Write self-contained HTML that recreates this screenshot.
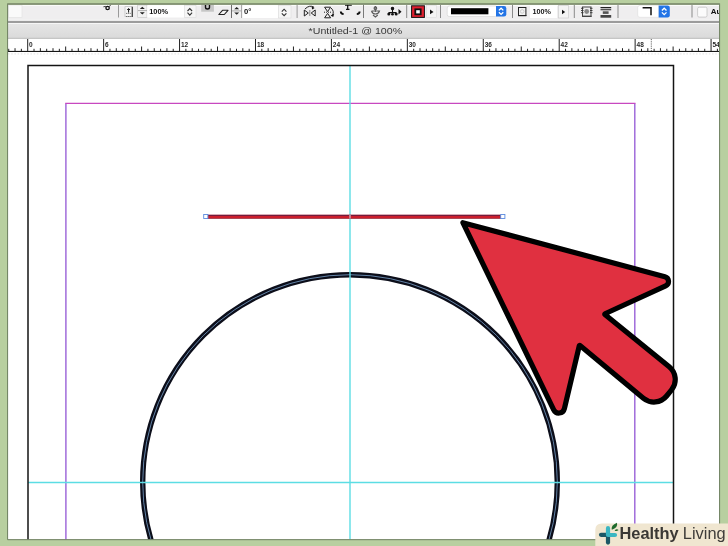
<!DOCTYPE html>
<html><head><meta charset="utf-8">
<style>
html,body{margin:0;padding:0;}
body{width:728px;height:546px;overflow:hidden;background:#b8cfa0;position:relative;}
svg{position:absolute;left:0;top:0;font-family:"Liberation Sans",sans-serif;will-change:transform;}
</style></head>
<body>
<svg width="728" height="546" viewBox="0 0 728 546">
<defs>
  <linearGradient id="tg" x1="0" y1="0" x2="0" y2="1"><stop offset="0" stop-color="#e6e6e6"/><stop offset="1" stop-color="#d9d9d9"/></linearGradient>
  <clipPath id="fc"><rect x="8" y="4" width="711" height="535.5"/></clipPath>
</defs>
<rect width="728" height="546" fill="#b8cfa0"/>
<g clip-path="url(#fc)">

  <!-- toolbar -->
  <rect x="8" y="4" width="711" height="17" fill="#efeeef"/>
  <rect x="8" y="4.9" width="711" height="1.1" fill="#fbfcfa"/>
  <rect x="8" y="19.6" width="711" height="1.3" fill="#f5f5f5"/>
  <rect x="8" y="20.9" width="711" height="2.1" fill="#9c9c9c"/>
  <rect x="8.5" y="5" width="13.5" height="12.5" fill="#fafafa" stroke="#e0e0e0" stroke-width="0.6"/>
  <!-- cut icon at 104-112 -->
  <circle cx="107.6" cy="8" r="1.7" fill="none" stroke="#111" stroke-width="1.3"/>
  <path d="M103.4 6.8 Q105.5 6 106.6 6.8 M109 6.8 L111 4.6" stroke="#333" stroke-width="0.9" fill="none"/>
  <rect x="118" y="5" width="1" height="12.5" fill="#9a9a9a"/>
  <!-- text frame icon -->
  <rect x="125" y="6.7" width="7.4" height="10" fill="#f6f6f6" stroke="#b4b4b4" stroke-width="0.6"/>
  <path d="M132.2 6.8 V17" stroke="#111" stroke-width="1"/>
  <path d="M128.6 8.6 V12.6 M127.2 10 L128.6 8.6 L130 10" stroke="#111" stroke-width="1" fill="none"/>
  <path d="M126 13.4 H131 M126 16.5 H131.5" stroke="#555" stroke-width="0.8" stroke-dasharray="1.2 0.6"/>
  <!-- spinner 1 -->
  <rect x="137.7" y="5" width="9.3" height="12.5" fill="#f2f2f2" stroke="#c4c4c4" stroke-width="0.6"/>
  <path d="M139.8 9 L142.3 6.8 L144.8 9 Z M139.8 12.3 L142.3 14.5 L144.8 12.3 Z" fill="#222"/>
  <path d="M138 10.6 H147" stroke="#9a9a9a" stroke-width="0.8"/>
  <rect x="147.2" y="5.5" width="37.5" height="12" fill="#fff"/>
  <text x="149.2" y="13.6" font-size="7.7" font-weight="bold" fill="#151515" textLength="19" lengthAdjust="spacingAndGlyphs">100%</text>
  <rect x="184.7" y="5.5" width="11.3" height="12" fill="#f6f6f6" stroke="#d6d6d6" stroke-width="0.5"/>
  <path d="M187.5 11 L189.8 8.6 L192.1 11 M187.5 12.7 L189.8 15.1 L192.1 12.7" stroke="#333" stroke-width="1.1" fill="none"/>
  <!-- gray block -->
  <rect x="201.2" y="4.2" width="12.7" height="7.5" fill="#c6c6c6"/>
  <path d="M205.5 5 V7.2 Q205.5 9 207.5 9 Q209.5 9 209.5 7.2 V5" stroke="#111" stroke-width="1.4" fill="none"/>
  <!-- shear -->
  <path d="M218.8 14.5 L222.5 10.3 H228 L224.3 14.5 Z" fill="#f4f4f4" stroke="#222" stroke-width="1.1" stroke-linejoin="round"/>
  <rect x="231" y="5" width="1" height="13" fill="#6e6e6e"/>
  <rect x="232" y="5" width="9.3" height="13" fill="#f2f2f2"/>
  <path d="M234.2 9.2 L236.7 7 L239.2 9.2 Z M234.2 12.6 L236.7 14.8 L239.2 12.6 Z" fill="#222"/>
  <path d="M232 10.9 H241" stroke="#9a9a9a" stroke-width="0.8"/>
  <rect x="241.3" y="5" width="0.9" height="13" fill="#8a8a8a"/>
  <rect x="242.3" y="5.5" width="36" height="12.5" fill="#fff"/>
  <text x="244" y="13.9" font-size="7.7" font-weight="bold" fill="#111">0°</text>
  <rect x="278.4" y="5.5" width="12.6" height="12.5" fill="#f6f6f6" stroke="#d6d6d6" stroke-width="0.5"/>
  <path d="M281.8 11.6 L284.1 9.2 L286.4 11.6 M281.8 13.3 L284.1 15.7 L286.4 13.3" stroke="#333" stroke-width="1.1" fill="none"/>
  <rect x="296.6" y="5" width="1" height="13" fill="#9a9a9a"/>
  <!-- flip h icon -->
  <g stroke="#222" stroke-width="1" fill="none">
    <path d="M304.3 10 L308.3 13 L304.3 16 Z"/>
    <path d="M315.2 10 L311.2 13 L315.2 16 Z"/>
    <path d="M309.8 10.5 V16.5" stroke-dasharray="1 1"/>
    <path d="M305 9 Q309.5 4.5 314 7.2"/>
  </g>
  <path d="M311.6 6.4 L314.6 7.9 L312.2 9.6 Z" fill="#111"/>
  <!-- flip v icon -->
  <g stroke="#222" stroke-width="1" fill="none">
    <path d="M324.6 7.2 L327.6 11.6 L330.6 7.2 Z"/>
    <path d="M324.6 17.8 L327.6 13.4 L330.6 17.8 Z"/>
    <path d="M324 12.2 H331" stroke-dasharray="1 1"/>
    <path d="M331 8 Q335 11.5 332 16"/>
  </g>
  <path d="M330.6 15.6 L333.2 17 L334.2 13.8 Z" fill="#111"/>
  <!-- corner icon -->
  <path d="M345 5 H351.8 M347.7 5 V9.5 M346 9.3 H349.5" stroke="#111" stroke-width="1.3" fill="none"/>
  <path d="M340.8 11.4 Q340.8 13.9 343.6 14" stroke="#111" stroke-width="1.9" fill="none"/>
  <path d="M359.6 11.4 Q359.6 13.9 356.8 14" stroke="#111" stroke-width="1.9" fill="none"/>
  <rect x="363" y="4.5" width="1" height="13.5" fill="#7a7a7a"/>
  <!-- select container icon -->
  <g stroke="#5a5a5a" stroke-width="1.1" fill="none">
    <path d="M375.4 6 V12"/>
    <circle cx="375.4" cy="8.2" r="1.3" fill="#888"/>
    <path d="M371.5 11 H379.5 Q378.5 14 375.4 14 Q372.5 14 371.5 11"/>
    <path d="M373 15 L375.4 17 L377.8 15"/>
  </g>
  <!-- select content icon -->
  <g stroke="#111" stroke-width="1.1" fill="none">
    <path d="M392.5 8 V13"/>
    <circle cx="392.5" cy="8.4" r="1.2" fill="#111"/>
    <path d="M388.6 12.6 H396.4"/>
  </g>
  <circle cx="388.8" cy="14" r="1.5" fill="#111"/><circle cx="392.5" cy="14.2" r="1.3" fill="#111"/><circle cx="396.2" cy="14" r="1.5" fill="#111"/>
  <path d="M398.5 9 L401.5 11.8 L398.5 14.5 Z" fill="#111"/>
  <rect x="406.2" y="5" width="1" height="13" fill="#8a8a8a"/>
  <!-- stroke swatch -->
  <rect x="411.6" y="5.8" width="12.8" height="11.6" fill="#e0202f" stroke="#111" stroke-width="1"/>
  <rect x="415.3" y="9.3" width="5.4" height="5" fill="#fff" stroke="#111" stroke-width="1.8"/>
  <rect x="426.4" y="5.5" width="9.9" height="12" fill="#f4f4f4" stroke="#d8d8d8" stroke-width="0.5"/>
  <path d="M430 9.5 L433.5 11.9 L430 14.3 Z" fill="#111"/>
  <rect x="440" y="5" width="1" height="13" fill="#8a8a8a"/>
  <!-- stroke dropdown -->
  <rect x="447.2" y="6" width="50" height="10.5" rx="2" fill="#fff" stroke="#d2d2d2" stroke-width="0.6"/>
  <rect x="451" y="8.2" width="37.4" height="6.1" fill="#000"/>
  <path d="M496 6 H504 Q506.3 6 506.3 8.3 V14.2 Q506.3 16.5 504 16.5 H496 Z" fill="#2274e6"/>
  <path d="M498.9 10.4 L501.1 8.2 L503.3 10.4 M498.9 12.2 L501.1 14.4 L503.3 12.2" stroke="#fff" stroke-width="1.3" fill="none"/>
  <rect x="512" y="5" width="1" height="13" fill="#8a8a8a"/>
  <!-- opacity icon -->
  <rect x="518.5" y="7.5" width="7.4" height="8" fill="#f2f2f2" stroke="#222" stroke-width="1"/>
  <rect x="518" y="15" width="8.4" height="1.2" fill="#222"/>
  <circle cx="522.2" cy="11.4" r="1.8" fill="none" stroke="#bbb" stroke-width="0.7"/>
  <rect x="530" y="5.5" width="27" height="12.5" fill="#fff"/>
  <text x="532.4" y="13.9" font-size="7.7" font-weight="bold" fill="#151515" textLength="18.5" lengthAdjust="spacingAndGlyphs">100%</text>
  <rect x="558.4" y="5.5" width="10.1" height="12.5" fill="#f4f4f4" stroke="#c8c8c8" stroke-width="0.6"/>
  <path d="M562 9.8 L565.2 12 L562 14.2 Z" fill="#111"/>
  <rect x="573.8" y="5" width="1" height="13" fill="#8a8a8a"/>
  <!-- wrap icons -->
  <rect x="582.5" y="7" width="8.5" height="9.5" fill="#eee" stroke="#444" stroke-width="1"/>
  <path d="M581 8.3 H583.5 M581 10.5 H583.5 M581 12.7 H583.5 M590 8.3 H592.5 M590 10.5 H592.5 M590 12.7 H592.5" stroke="#333" stroke-width="0.9"/>
  <circle cx="586.7" cy="11.5" r="2.4" fill="#888"/>
  <rect x="582" y="15.6" width="9.5" height="1.4" fill="#444"/>
  <path d="M600.5 7.6 H611.2 M600.5 9.7 H611.2" stroke="#222" stroke-width="1.1"/>
  <rect x="602.8" y="11.3" width="5.8" height="2.6" fill="#555"/>
  <rect x="600.5" y="15" width="10.7" height="2.7" fill="#444"/>
  <rect x="617.5" y="5" width="1" height="13" fill="#8a8a8a"/>
  <!-- corner dropdown -->
  <path d="M658.7 5.4 H640 Q637.7 5.4 637.7 7.7 V15 Q637.7 17.3 640 17.3 H658.7 Z" fill="#fff" stroke="#d8d8d8" stroke-width="0.5"/>
  <path d="M642.6 7.7 H651 V15.3" stroke="#111" stroke-width="1.5" fill="none"/>
  <path d="M658.7 5.4 H667.5 Q669.8 5.4 669.8 7.7 V15.2 Q669.8 17.5 667.5 17.5 H658.7 Z" fill="#2274e6"/>
  <path d="M661.9 10.5 L664.2 8.2 L666.5 10.5 M661.9 12.4 L664.2 14.7 L666.5 12.4" stroke="#fff" stroke-width="1.3" fill="none"/>
  <rect x="691.5" y="5" width="1" height="12.5" fill="#8a8a8a"/>
  <rect x="697.6" y="7.2" width="9.4" height="9.9" rx="1.5" fill="#fbfbfb" stroke="#bdbdbd" stroke-width="0.7"/>
  <text x="710.8" y="14.4" font-size="8" font-weight="bold" fill="#111">Au</text>


  <rect x="8" y="23" width="711" height="15.9" fill="url(#tg)"/>
  <rect x="8" y="23" width="711" height="1" fill="#f6f6f6"/>
  <rect x="8" y="37.8" width="711" height="1.1" fill="#bdbdbd"/>
  <text x="308.6" y="34.4" font-size="9.9" fill="#383838" textLength="93.5" lengthAdjust="spacingAndGlyphs">*Untitled-1 @ 100%</text>


  <rect x="8" y="38.9" width="711" height="12.1" fill="#fff"/>
  <path d="M8.72 48.8V51.5 M15.04 48.2V51.5 M21.37 48.8V51.5 M27.70 39V51.5 M34.03 48.8V51.5 M40.36 48.2V51.5 M46.68 48.8V51.5 M53.01 48.2V51.5 M59.34 48.8V51.5 M65.67 46.5V51.5 M71.99 48.8V51.5 M78.32 48.2V51.5 M84.65 48.8V51.5 M90.98 48.2V51.5 M97.30 48.8V51.5 M103.63 39V51.5 M109.96 48.8V51.5 M116.29 48.2V51.5 M122.61 48.8V51.5 M128.94 48.2V51.5 M135.27 48.8V51.5 M141.59 46.5V51.5 M147.92 48.8V51.5 M154.25 48.2V51.5 M160.58 48.8V51.5 M166.91 48.2V51.5 M173.23 48.8V51.5 M179.56 39V51.5 M185.89 48.8V51.5 M192.22 48.2V51.5 M198.54 48.8V51.5 M204.87 48.2V51.5 M211.20 48.8V51.5 M217.53 46.5V51.5 M223.85 48.8V51.5 M230.18 48.2V51.5 M236.51 48.8V51.5 M242.84 48.2V51.5 M249.16 48.8V51.5 M255.49 39V51.5 M261.82 48.8V51.5 M268.15 48.2V51.5 M274.47 48.8V51.5 M280.80 48.2V51.5 M287.13 48.8V51.5 M293.45 46.5V51.5 M299.78 48.8V51.5 M306.11 48.2V51.5 M312.44 48.8V51.5 M318.77 48.2V51.5 M325.09 48.8V51.5 M331.42 39V51.5 M337.75 48.8V51.5 M344.07 48.2V51.5 M350.40 48.8V51.5 M356.73 48.2V51.5 M363.06 48.8V51.5 M369.39 46.5V51.5 M375.71 48.8V51.5 M382.04 48.2V51.5 M388.37 48.8V51.5 M394.69 48.2V51.5 M401.02 48.8V51.5 M407.35 39V51.5 M413.68 48.8V51.5 M420.01 48.2V51.5 M426.33 48.8V51.5 M432.66 48.2V51.5 M438.99 48.8V51.5 M445.31 46.5V51.5 M451.64 48.8V51.5 M457.97 48.2V51.5 M464.30 48.8V51.5 M470.63 48.2V51.5 M476.95 48.8V51.5 M483.28 39V51.5 M489.61 48.8V51.5 M495.94 48.2V51.5 M502.26 48.8V51.5 M508.59 48.2V51.5 M514.92 48.8V51.5 M521.25 46.5V51.5 M527.57 48.8V51.5 M533.90 48.2V51.5 M540.23 48.8V51.5 M546.56 48.2V51.5 M552.88 48.8V51.5 M559.21 39V51.5 M565.54 48.8V51.5 M571.87 48.2V51.5 M578.19 48.8V51.5 M584.52 48.2V51.5 M590.85 48.8V51.5 M597.18 46.5V51.5 M603.50 48.8V51.5 M609.83 48.2V51.5 M616.16 48.8V51.5 M622.49 48.2V51.5 M628.81 48.8V51.5 M635.14 39V51.5 M641.47 48.8V51.5 M647.80 48.2V51.5 M654.12 48.8V51.5 M660.45 48.2V51.5 M666.78 48.8V51.5 M673.11 46.5V51.5 M679.43 48.8V51.5 M685.76 48.2V51.5 M692.09 48.8V51.5 M698.42 48.2V51.5 M704.74 48.8V51.5 M711.07 39V51.5 M717.40 48.8V51" stroke="#222" stroke-width="1" fill="none"/>
  <rect x="8" y="50.9" width="711" height="1.2" fill="#151515"/>
  <path d="M651.3 39 V51" stroke="#555" stroke-width="0.9" stroke-dasharray="1.2 1"/>
  <g font-size="6.5" font-weight="bold" fill="#2a2a2a"><text x="29.10" y="46.7">0</text>
<text x="105.03" y="46.7">6</text>
<text x="180.96" y="46.7">12</text>
<text x="256.89" y="46.7">18</text>
<text x="332.82" y="46.7">24</text>
<text x="408.75" y="46.7">30</text>
<text x="484.68" y="46.7">36</text>
<text x="560.61" y="46.7">42</text>
<text x="636.54" y="46.7">48</text>
<text x="712.47" y="46.7">54</text></g>


  <rect x="8" y="52" width="711" height="487.5" fill="#fff"/>
  <path d="M8 53.9 H719" stroke="#e0e0e0" stroke-width="0.9" stroke-dasharray="1.6 1.6"/>
  <!-- margins -->
  <path d="M65.9 546 V103.4 M634.8 546 V103.4" fill="none" stroke="#9a62d8" stroke-width="1.4"/>
  <path d="M65.2 103.4 H635.5" fill="none" stroke="#c848c0" stroke-width="1.4"/>
  <!-- circle -->
  <circle cx="350" cy="482" r="207.3" fill="none" stroke="#0c0e1a" stroke-width="5.4"/>
  <circle cx="350" cy="482" r="207.3" fill="none" stroke="#7aa2cc" stroke-width="0.8"/>
  <!-- guides -->
  <line x1="350" y1="65.5" x2="350" y2="546" stroke="#5cdde4" stroke-width="1.4"/>
  <line x1="28" y1="482.5" x2="673.5" y2="482.5" stroke="#5cdde4" stroke-width="1.4"/>
  <!-- page -->
  <rect x="28" y="65.5" width="645.5" height="480" fill="none" stroke="#141414" stroke-width="1.5"/>
  <!-- red line -->
  <rect x="207" y="214.8" width="294" height="3.8" fill="#cc1e2c"/>
  <rect x="207" y="214.8" width="294" height="1.1" fill="#6a1c40"/>
  <rect x="207" y="218" width="294" height="0.6" fill="#8a2a3a"/>
  <rect x="203.7" y="214.5" width="4.2" height="4" fill="#fff" stroke="#5a8ae0" stroke-width="0.9"/>
  <rect x="500.7" y="214.5" width="4.2" height="4" fill="#fff" stroke="#5a8ae0" stroke-width="0.9"/>
  <rect x="349.1" y="214.6" width="1.8" height="4" fill="#c89aa8" opacity="0.9"/>
  <!-- arrow -->
  <path d="M463.43 220.18 L665.54 274.14 A7.50 7.50 0 0 1 666.74 288.20 L609.29 314.62 A0.01 0.01 0 0 0 609.29 314.64 L670.86 364.82 A19.00 19.00 0 0 1 673.58 391.55 L668.61 397.64 A19.00 19.00 0 0 1 641.73 400.24 L581.05 349.72 A0.01 0.01 0 0 0 581.03 349.73 L566.92 409.28 A8.30 8.30 0 0 1 551.38 410.98 L460.54 223.68 A2.50 2.50 0 0 1 463.43 220.18 Z" fill="#000"/>
  <path d="M467.81 226.73 L664.20 279.16 A2.30 2.30 0 0 1 664.57 283.48 L603.90 311.38 A3.00 3.00 0 0 0 603.26 316.43 L667.57 368.85 A13.80 13.80 0 0 1 669.55 388.26 L664.58 394.36 A13.80 13.80 0 0 1 645.06 396.24 L581.64 343.45 A3.00 3.00 0 0 0 576.80 345.06 L561.86 408.08 A3.10 3.10 0 0 1 556.06 408.71 L467.80 226.74 A0.01 0.01 0 0 1 467.81 226.73 Z" fill="#e03040"/>

</g>
  <path d="M7.6 3.5 V539.7 H719.6 V3.5" fill="none" stroke="#6f7f62" stroke-width="1"/>
  <rect x="7.6" y="3.1" width="712" height="1.8" fill="#80906f"/>

  <path d="M595.3 546 V530 Q595.3 523.5 601.8 523.5 H728 V546 Z" fill="#f0e6d0"/>
  <path d="M601 534.8 H608" stroke="#1c5866" stroke-width="4.2" stroke-linecap="round"/>
  <path d="M608 542.6 V535" stroke="#1c5866" stroke-width="4.2" stroke-linecap="round"/>
  <path d="M608 528.2 V535 H615" stroke="#3ab6c2" stroke-width="4.2" stroke-linecap="round" stroke-linejoin="round" fill="none"/>
  <path d="M611.8 529.8 Q610.6 525.4 617 522.8 Q618.2 527.8 611.8 529.8 Z" fill="#1f6a2c"/>
  <path d="M614.6 530.4 Q616.6 528.4 618.6 529.9 Q616.6 531.8 614.6 530.4 Z" fill="#1f6a2c"/>
  <text x="619.5" y="539.2" font-weight="bold" font-size="16.4" fill="#3a3835">Healthy</text>
  <text x="682.8" y="539.2" font-size="16.4" fill="#3e3c39">Living</text>

</svg>
</body></html>
